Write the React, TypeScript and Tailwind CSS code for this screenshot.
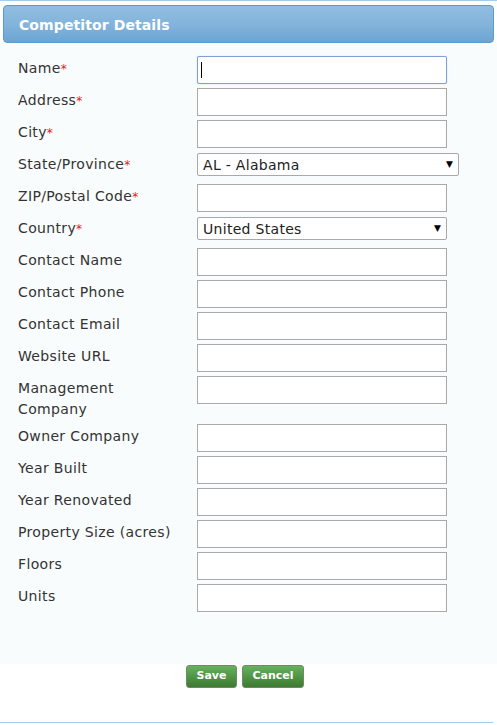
import React from 'react'

const font = { fontFamily: '"DejaVu Sans", Verdana, sans-serif' }

type Row = { label: React.ReactNode; req?: boolean; kind?: 'text' | 'select'; value?: string; wide?: boolean; focus?: boolean; tall?: boolean }

const rows: Row[] = [
  { label: 'Name', req: true, focus: true },
  { label: 'Address', req: true },
  { label: 'City', req: true },
  { label: 'State/Province', req: true, kind: 'select', value: 'AL - Alabama', wide: true },
  { label: 'ZIP/Postal Code', req: true },
  { label: 'Country', req: true, kind: 'select', value: 'United States' },
  { label: 'Contact Name' },
  { label: 'Contact Phone' },
  { label: 'Contact Email' },
  { label: 'Website URL' },
  { label: <>Management<br />Company</>, tall: true },
  { label: 'Owner Company' },
  { label: 'Year Built' },
  { label: 'Year Renovated' },
  { label: 'Property Size (acres)' },
  { label: 'Floors' },
  { label: 'Units' },
]

const Field = ({ row }: { row: Row }) => {
  if (row.kind === 'select') {
    return (
      <div className={`h-[23px] ${row.wide ? 'w-[262px]' : 'w-[250px]'} border border-[#a9a9a9] rounded-[2px] bg-white flex items-center justify-between pl-[5px] pr-[5px] mt-[1px]`}>
        <span className="text-[14px] text-[#222] leading-none tracking-[0.3px]">{row.value}</span>
        <span className="text-[9px] text-black leading-none">▼</span>
      </div>
    )
  }
  return (
    <div
      className={`h-[28px] w-[250px] bg-white flex items-center ${
        row.focus ? 'border border-[#7f9fd6] rounded-[2px] shadow-[0_0_1px_#9bb8e6]' : 'border border-[#a9a9a9]'
      }`}
    >
      {row.focus && <span className="ml-[3px] w-[1px] h-[16px] bg-black" />}
    </div>
  )
}

const App = () => {
  return (
    <div className="w-[497px] h-[725px] bg-white relative overflow-hidden" style={font}>
      <div className="h-[1px] bg-[#a9cbe6]" />
      <div className="px-[3px] pt-[4px]">
        <div className="h-[38px] rounded-[4px] border border-[#5b9bd0] bg-gradient-to-b from-[#91bde0] via-[#84b4db] to-[#6aa5d3] flex items-center pl-[15px] pt-[2px]">
          <h1 className="text-[14px] font-bold text-white tracking-[0.1px]">Competitor Details</h1>
        </div>
      </div>
      <div className="bg-[#f9fcfc] pl-[18px] pt-[13px] pb-[52px] flex flex-col gap-[4px]">
        {rows.map((row, i) => (
          <div key={i} className={`flex ${row.tall ? 'h-[44px]' : 'h-[28px]'}`}>
            <div className="w-[179px] text-[14px] text-[#333] leading-[21px] pt-[2px] tracking-[0.35px]">
              {row.label}
              {row.req && <span className="text-[#e02020] text-[12px]">*</span>}
            </div>
            <Field row={row} />
          </div>
        ))}
      </div>
      <div className="flex justify-center gap-[5px] pt-[1px] pr-[7px]">
        <button className="h-[23px] w-[51px] rounded-[3px] border border-[#6e8a66] bg-gradient-to-b from-[#66b25e] to-[#3d7a31] text-white text-[11px] font-bold">
          Save
        </button>
        <button className="h-[23px] w-[62px] rounded-[3px] border border-[#6e8a66] bg-gradient-to-b from-[#66b25e] to-[#3d7a31] text-white text-[11px] font-bold">
          Cancel
        </button>
      </div>
      <div className="absolute left-0 right-[4px] bottom-[2px] h-[1px] bg-[#a9cbe6]" />
    </div>
  )
}

export default App
